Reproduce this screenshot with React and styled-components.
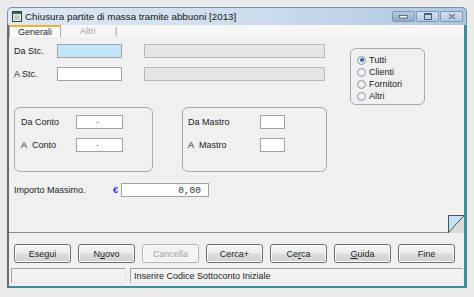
import React from "react"
import styled, { createGlobalStyle } from "styled-components"

const Global = createGlobalStyle`
    html, body {
        margin: 0;
        padding: 0;
        background: #ebebeb;
        font-family: "Liberation Sans", Arial, sans-serif;
        font-size: 9px;
        color: #1b1b1b;
    }
    * { box-sizing: border-box; }
`

const Page = styled.div`
    width: 474px;
    height: 297px;
    padding: 7px 0 0 7px;
`

const Window = styled.div`
    width: 460px;
    height: 281px;
    display: flex;
    flex-direction: column;
`

const TitleBar = styled.div`
    height: 18px;
    display: flex;
    align-items: center;
    padding: 0 3px 0 4px;
    background: linear-gradient(to right, #dde8f4 0%, #cddcee 55%, #aec6e1 100%);
    border: 1px solid #7a8ea6;
    border-bottom: none;
    border-radius: 5px 5px 0 0;
`

const Title = styled.span`
    margin-left: 3px;
    font-size: 9.8px;
    color: #151515;
    flex: 1;
`

const Controls = styled.div`
    display: flex;
    gap: 1px;
`

const Ctrl = styled.div`
    width: 23px;
    height: 11px;
    display: flex;
    align-items: center;
    justify-content: center;
    border: 1px solid #7f95b0;
    border-radius: 2px;
    background: ${p => p.$hot
        ? "linear-gradient(#b8cce3, #8ea9c9)"
        : "linear-gradient(#d3e0ef, #b3c8e1)"};
`

const Client = styled.div`
    flex: 1;
    display: flex;
    flex-direction: column;
    background: #f0f0f0;
    border-left: 2px solid #686c70;
    border-right: 3px solid #3e8b9b;
    border-bottom: 2px solid #3e8b9b;
`

const TabStrip = styled.div`
    height: 12px;
    display: flex;
    align-items: stretch;
    background: #f6f6f6;
`

const Tab = styled.div`
    width: ${p => p.$w}px;
    display: flex;
    align-items: center;
    justify-content: ${p => p.$active ? "center" : "flex-start"};
    padding-left: ${p => p.$active ? 0 : 19}px;
    color: ${p => p.$active ? "#1b1b1b" : "#a3a3a3"};
    background: ${p => p.$active ? "#fdfdfd" : "transparent"};
    border: ${p => p.$active ? "1px solid #a7a7a7" : "none"};
    border-top: ${p => p.$active ? "2px solid #f1b23c" : "none"};
    border-bottom: none;
`

const TabSep = styled.span`
    align-self: center;
    color: #8a8a8a;
    margin-left: 14px;
`

const Panel = styled.div`
    position: relative;
    height: 196px;
    padding: 7px 0 0 5px;
    border-bottom: 1px solid #8c8c8c;
`

const TopSection = styled.div`
    display: flex;
    align-items: flex-start;
    margin-bottom: 2px;
`

const Rows = styled.div`
    display: flex;
    flex-direction: column;
    gap: ${p => p.$gap}px;
`

const Row = styled.div`
    display: flex;
    align-items: center;
    height: 14px;
`

const Label = styled.span`
    width: ${p => p.$w}px;
    flex-shrink: 0;
`

const Input = styled.div`
    width: ${p => p.$w}px;
    height: ${p => p.$h || 14}px;
    margin-left: ${p => p.$ml || 0}px;
    display: flex;
    align-items: center;
    justify-content: ${p => p.$align || "flex-start"};
    padding: 0 7px 0 3px;
    background: ${p => p.$bg || "#ffffff"};
    border: 1px solid ${p => p.$disabled ? "#b9b9b9" : "#a2a2a2"};
    font-family: ${p => p.$mono ? '"Liberation Mono", "DejaVu Sans Mono", monospace' : "inherit"};
    font-size: ${p => p.$mono ? 9.5 : 9}px;
    color: ${p => p.$mono ? "#333" : "inherit"};
`

const Group = styled.div`
    width: ${p => p.$w}px;
    height: ${p => p.$h}px;
    margin: ${p => p.$m || 0};
    border: 1px solid #a9a9a9;
    border-radius: 6px;
    padding: ${p => p.$pad};
`

const RadioRow = styled.label`
    display: flex;
    align-items: center;
    height: 12px;
    gap: 3px;
`

const RadioDot = styled.span`
    width: 9px;
    height: 9px;
    border-radius: 50%;
    border: 1px solid #8f9aa6;
    background: radial-gradient(circle, #ffffff 0%, #e6e9ee 70%, #cfd4da 100%);
    display: flex;
    align-items: center;
    justify-content: center;
    &::after {
        content: "";
        width: 4px;
        height: 4px;
        border-radius: 50%;
        background: ${p => p.$on ? "#2f63a8" : "transparent"};
    }
`

const GroupRow = styled.div`
    display: flex;
    gap: 29px;
`

const AmountRow = styled(Row)`
    margin-top: 11px;
`

const Euro = styled.span`
    width: 9px;
    padding-left: 1px;
    color: #2a2ad8;
    font-weight: bold;
    font-size: 9px;
`

const Grip = styled.svg`
    position: absolute;
    right: 0;
    bottom: -1px;
`

const ButtonRow = styled.div`
    display: flex;
    gap: 7px;
    padding-left: 5px;
    margin-top: 11px;
`

const Button = styled.div`
    width: 57px;
    height: 19px;
    display: flex;
    align-items: center;
    justify-content: center;
    border-radius: 3px;
    border: 1px solid ${p => p.disabled ? "#b2b5b8" : "#6f6f6f"};
    color: ${p => p.disabled ? "#a4a4a4" : "#1b1b1b"};
    background: ${p => p.disabled
        ? "#f3f3f3"
        : "linear-gradient(#f7f7f7 0%, #ececec 45%, #dcdcdc 55%, #d2d2d2 100%)"};
    box-shadow: inset 0 0 0 1px #fbfbfb;
    u { text-decoration: underline; }
`

const StatusBar = styled.div`
    display: flex;
    gap: 4px;
    padding: 0 1px 0 2px;
    margin-top: 5px;
`

const StatusCell = styled.div`
    height: 15px;
    width: ${p => p.$w ? p.$w + "px" : "auto"};
    flex: ${p => p.$w ? "none" : 1};
    border: 1px solid #a4a4a4;
    border-right-color: #e6e6e6;
    border-bottom-color: #e6e6e6;
    background: #f2f2f2;
    display: flex;
    align-items: center;
    padding-left: 3px;
`

const AppIcon = () => (
    <svg width="10" height="11" viewBox="0 0 10 11">
        <rect x="0.5" y="0.5" width="9" height="10" fill="#e4efe6" stroke="#2f4a3a" />
        <rect x="1" y="1" width="8" height="2" fill="#3d6b4e" />
        <rect x="2" y="4" width="6" height="5" fill="#b9d4c4" />
    </svg>
)

const radios = ["Tutti", "Clienti", "Fornitori", "Altri"]

const App = () => {
    return (
        <Page>
            <Global />
            <Window>
                <TitleBar>
                    <AppIcon />
                    <Title>Chiusura partite di massa tramite abbuoni [2013]</Title>
                    <Controls>
                        <Ctrl $hot>
                            <svg width="9" height="4"><rect x="0.5" y="0.5" width="8" height="2.5" fill="#f4f7fb" stroke="#4a5f7a" strokeWidth="0.8" /></svg>
                        </Ctrl>
                        <Ctrl>
                            <svg width="8" height="7"><rect x="0.5" y="0.5" width="7" height="6" fill="none" stroke="#4c6079" /><rect x="0.5" y="0.5" width="7" height="1.5" fill="#4c6079" /></svg>
                        </Ctrl>
                        <Ctrl>
                            <svg width="8" height="7" viewBox="0 0 8 7"><path d="M1 1 L7 6 M7 1 L1 6" stroke="#4c6079" strokeWidth="1.3" /><path d="M1 1 L7 6 M7 1 L1 6" stroke="#dfe7f1" strokeWidth="0.4" /></svg>
                        </Ctrl>
                    </Controls>
                </TitleBar>
                <Client>
                    <TabStrip>
                        <Tab $active $w={52}>Generali</Tab>
                        <Tab $w={40}>Altri</Tab>
                        <TabSep>|</TabSep>
                    </TabStrip>
                    <Panel>
                        <TopSection>
                            <Rows $gap={9}>
                                <Row>
                                    <Label $w={43}>Da Stc.</Label>
                                    <Input $w={65} $bg="#c3e5f9" />
                                    <Input $w={181} $ml={22} $bg="#e5e5e5" $disabled />
                                </Row>
                                <Row>
                                    <Label $w={43}>A Stc.</Label>
                                    <Input $w={65} />
                                    <Input $w={181} $ml={22} $bg="#e5e5e5" $disabled />
                                </Row>
                            </Rows>
                            <Group $w={75} $h={57} $m="4px 0 0 25px" $pad="5px 0 0 6px">
                                {radios.map((r, i) => (
                                    <RadioRow key={r}>
                                        <RadioDot $on={i === 0} />
                                        {r}
                                    </RadioRow>
                                ))}
                            </Group>
                        </TopSection>
                        <GroupRow>
                            <Group $w={139} $h={65} $pad="7px 0 0 6px">
                                <Rows $gap={9}>
                                    <Row>
                                        <Label $w={55}>Da Conto</Label>
                                        <Input $w={47} $align="center">·</Input>
                                    </Row>
                                    <Row>
                                        <Label $w={55}>A&nbsp; Conto</Label>
                                        <Input $w={47} $align="center">·</Input>
                                    </Row>
                                </Rows>
                            </Group>
                            <Group $w={145} $h={65} $pad="7px 0 0 5px">
                                <Rows $gap={9}>
                                    <Row>
                                        <Label $w={72}>Da Mastro</Label>
                                        <Input $w={25} />
                                    </Row>
                                    <Row>
                                        <Label $w={72}>A&nbsp; Mastro</Label>
                                        <Input $w={25} />
                                    </Row>
                                </Rows>
                            </Group>
                        </GroupRow>
                        <AmountRow>
                            <Label $w={98}>Importo Massimo.</Label>
                            <Euro>€</Euro>
                            <Input $w={88} $align="flex-end" $mono>0,00</Input>
                        </AmountRow>
                        <Grip width="16" height="18" viewBox="0 0 16 18">
                            <polygon points="0,0 16,0 0,18" fill="#c0e3f6" />
                            <polygon points="16,0 16,18 0,18" fill="#dadada" />
                            <path d="M0.5 18 V0.5 H16" fill="none" stroke="#4f4f4f" />
                            <path d="M0.5 17.5 L16 0.5" stroke="#4f4f4f" />
                        </Grip>
                    </Panel>
                    <ButtonRow>
                        <Button>Esegui</Button>
                        <Button>N<u>u</u>ovo</Button>
                        <Button disabled>Cancella</Button>
                        <Button>Cerca+</Button>
                        <Button>Ce<u>r</u>ca</Button>
                        <Button><u>G</u>uida</Button>
                        <Button>Fine</Button>
                    </ButtonRow>
                    <StatusBar>
                        <StatusCell $w={115} />
                        <StatusCell>Inserire Codice Sottoconto Iniziale</StatusCell>
                    </StatusBar>
                </Client>
            </Window>
        </Page>
    )
}

export default App
